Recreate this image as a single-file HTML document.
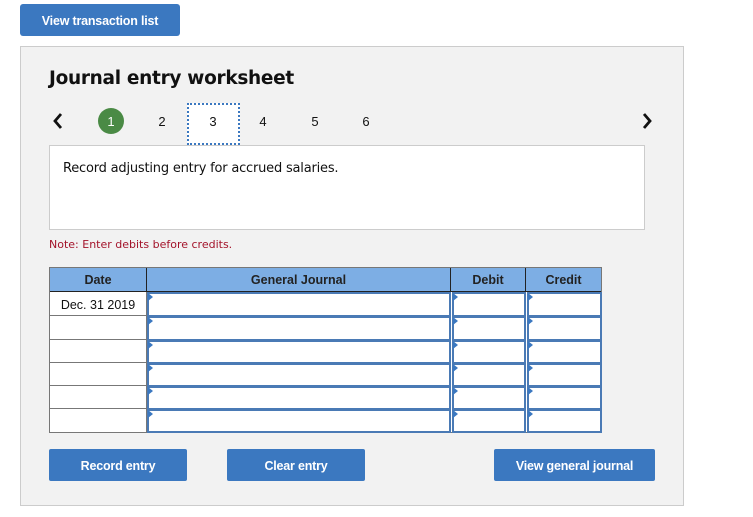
<!DOCTYPE html>
<html><head><style>
*{box-sizing:border-box;margin:0;padding:0}
body{width:753px;height:517px;background:#fff;font-family:"Liberation Sans",Arial,sans-serif;position:relative;overflow:hidden}
.a{position:absolute}
.btn{position:absolute;background:#3b78c0;color:#fff;font-weight:bold;font-size:12.5px;border-radius:3px;display:flex;align-items:center;justify-content:center;letter-spacing:-0.2px;padding-top:1px}
.num{position:absolute;top:114px;font-size:13px;color:#111;width:20px;text-align:center}
.cell{position:absolute;background:#fff;border-right:1px solid #777;border-bottom:1px solid #777}
.inp{position:absolute;background:#fff;border:2px solid #4a7ab5}
.inp:before{content:"";position:absolute;left:-1px;top:-1px;border-left:5px solid #3b78c0;border-top:4px solid transparent;border-bottom:4px solid transparent}
.hd{position:absolute;top:268px;height:24px;background:#7daee4;border-right:1px solid #222;border-bottom:1px solid #222;font-weight:bold;font-size:12.5px;color:#222;display:flex;align-items:center;justify-content:center;padding-top:1px}
</style></head><body>
<div class="btn" style="left:20px;top:4px;width:160px;height:32px">View transaction list</div>
<div class="a" style="left:20px;top:46px;width:664px;height:460px;background:#f2f2f2;border:1px solid #ccc"></div>
<div class="a" style="left:49px;top:68px;font-size:18.5px;font-weight:bold;color:#111;font-family:'DejaVu Sans',sans-serif;letter-spacing:-0.3px">Journal entry worksheet</div>
<svg class="a" style="left:52px;top:112px" width="12" height="18"><path d="M9 2 L3 9 L9 16" stroke="#111" stroke-width="2.8" fill="none"/></svg>
<svg class="a" style="left:641px;top:112px" width="12" height="18"><path d="M3 2 L9 9 L3 16" stroke="#111" stroke-width="2.8" fill="none"/></svg>
<div class="a" style="left:98px;top:108px;width:26px;height:26px;border-radius:50%;background:#4a8a45;color:#fff;font-size:13px;text-align:center;line-height:27px">1</div>
<div class="num" style="left:152px">2</div>
<div class="a" style="left:187px;top:103px;width:53px;height:42px;background:#fff;border:2px dotted #3b78c0"></div>
<div class="num" style="left:203px">3</div>
<div class="num" style="left:253px">4</div>
<div class="num" style="left:305px">5</div>
<div class="num" style="left:356px">6</div>
<div class="a" style="left:49px;top:145px;width:596px;height:85px;background:#fff;border:1px solid #ccc"></div>
<div class="a" style="left:63px;top:161px;font-size:13px;color:#111;font-family:'DejaVu Sans',sans-serif;letter-spacing:-0.2px">Record adjusting entry for accrued salaries.</div>
<div class="a" style="left:49px;top:238px;font-size:11px;color:#a3132a;font-family:'DejaVu Sans',sans-serif">Note: Enter debits before credits.</div>
<div class="a" style="left:49px;top:267px;width:553px;height:166px;border:1px solid #777;background:#fff"></div>
<div class="hd" style="left:50px;width:97px">Date</div>
<div class="hd" style="left:147px;width:304px">General Journal</div>
<div class="hd" style="left:451px;width:75px">Debit</div>
<div class="hd" style="left:526px;width:75px;border-right:none">Credit</div>
<div class="cell" style="left:50px;top:292px;width:97px;height:24px;font-size:12.5px;color:#111;text-align:center;line-height:26px">Dec. 31 2019</div>
<div class="cell" style="left:50px;top:316px;width:97px;height:24px"></div>
<div class="cell" style="left:50px;top:340px;width:97px;height:23px"></div>
<div class="cell" style="left:50px;top:363px;width:97px;height:23px"></div>
<div class="cell" style="left:50px;top:386px;width:97px;height:23px"></div>
<div class="cell" style="left:50px;top:409px;width:97px;height:23px;border-bottom:none"></div>
<div class="inp" style="left:147px;top:292px;width:304px;height:25px"></div>
<div class="inp" style="left:147px;top:316px;width:304px;height:25px"></div>
<div class="inp" style="left:147px;top:340px;width:304px;height:24px"></div>
<div class="inp" style="left:147px;top:363px;width:304px;height:24px"></div>
<div class="inp" style="left:147px;top:386px;width:304px;height:24px"></div>
<div class="inp" style="left:147px;top:409px;width:304px;height:24px"></div>
<div class="inp" style="left:452px;top:292px;width:74px;height:25px"></div>
<div class="inp" style="left:452px;top:316px;width:74px;height:25px"></div>
<div class="inp" style="left:452px;top:340px;width:74px;height:24px"></div>
<div class="inp" style="left:452px;top:363px;width:74px;height:24px"></div>
<div class="inp" style="left:452px;top:386px;width:74px;height:24px"></div>
<div class="inp" style="left:452px;top:409px;width:74px;height:24px"></div>
<div class="inp" style="left:527px;top:292px;width:75px;height:25px"></div>
<div class="inp" style="left:527px;top:316px;width:75px;height:25px"></div>
<div class="inp" style="left:527px;top:340px;width:75px;height:24px"></div>
<div class="inp" style="left:527px;top:363px;width:75px;height:24px"></div>
<div class="inp" style="left:527px;top:386px;width:75px;height:24px"></div>
<div class="inp" style="left:527px;top:409px;width:75px;height:24px"></div>
<div class="btn" style="left:49px;top:449px;width:138px;height:32px;border-radius:2px">Record entry</div>
<div class="btn" style="left:227px;top:449px;width:138px;height:32px;border-radius:2px">Clear entry</div>
<div class="btn" style="left:494px;top:449px;width:161px;height:32px;border-radius:2px">View general journal</div>
</body></html>
